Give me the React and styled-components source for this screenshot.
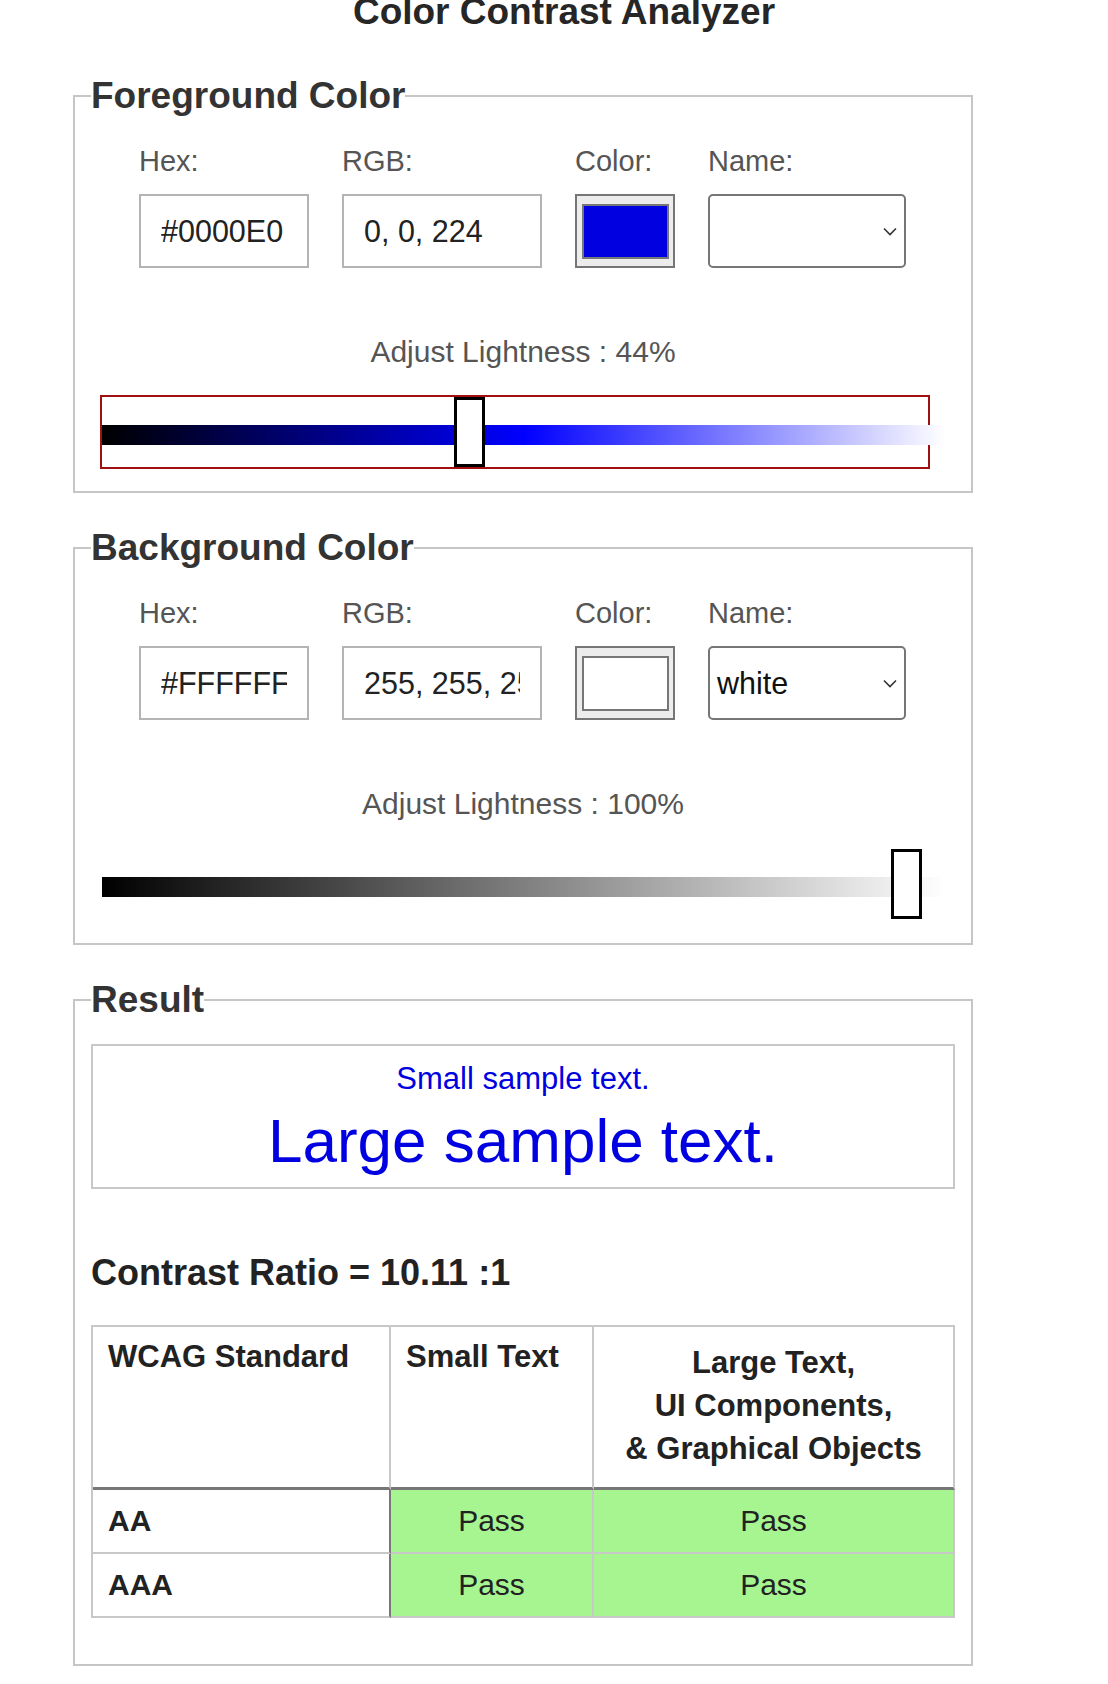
import React from "react";
import styled, { createGlobalStyle } from "styled-components";

const GlobalStyle = createGlobalStyle`
  html, body {
    margin: 0;
    padding: 0;
    background: #fff;
  }
  body {
    font-family: "Liberation Sans", Arial, Helvetica, sans-serif;
    color: #222;
  }
`;

const Page = styled.main`
  width: 1108px;
  padding-bottom: 18px;
`;

const Title = styled.h1`
  margin: 0;
  padding-left: 20px;
  text-align: center;
  font-size: 37px;
  line-height: 24px;
  font-weight: 700;
  color: #262626;
`;

const Panel = styled.fieldset`
  box-sizing: border-box;
  width: 900px;
  min-inline-size: 0;
  margin: ${(p) => (p.$first ? "51px" : "0")} 0 34.5px 73px;
  padding: 0 16px ${(p) => p.$padBottom}px;
  border: 2px solid #c6c6c6;
`;

const Legend = styled.legend`
  padding: 0;
  font-size: 37px;
  line-height: 42px;
  font-weight: 700;
  color: #333;
`;

const FieldGrid = styled.div`
  display: grid;
  grid-template-columns: 170px 200px 100px 198px;
  grid-template-rows: 32px 74px;
  column-gap: 33px;
  row-gap: 17px;
  margin-top: 28px;
  padding-left: 48px;
`;

const FieldLabel = styled.label`
  font-size: 29px;
  line-height: 32px;
  color: #555;
`;

const TextBox = styled.input`
  box-sizing: border-box;
  width: 100%;
  height: 74px;
  margin: 0;
  padding: 0 20px;
  border: 2px solid #b4b4b4;
  border-radius: 0;
  background: #fff;
  font: 30.5px "Liberation Sans", Arial, sans-serif;
  color: #222;
  outline: none;
`;

const SwatchFrame = styled.div`
  box-sizing: border-box;
  height: 74px;
  display: flex;
  align-items: center;
  justify-content: center;
  border: 2px solid #767676;
  background: #ececec;
`;

const Swatch = styled.div`
  box-sizing: border-box;
  width: 87px;
  height: 55px;
  border: 2px solid #777;
  background: ${(p) => p.$color};
`;

const NameSelect = styled.div`
  box-sizing: border-box;
  height: 74px;
  display: flex;
  align-items: center;
  justify-content: space-between;
  padding: 0 6px 0 7px;
  border: 2px solid #767676;
  border-radius: 5px;
  font-size: 30.5px;
  color: #111;
`;

const AdjustLabel = styled.div`
  margin-top: 67px;
  text-align: center;
  font-size: 30px;
  line-height: 34px;
  color: #555;
`;

const Slider = styled.div`
  position: relative;
  box-sizing: border-box;
  width: 830px;
  height: 74px;
  margin: 25.5px 0 0 9px;
  border: 2px solid ${(p) => (p.$focused ? "#a01010" : "transparent")};
`;

const Track = styled.div`
  width: 844px;
  height: 20px;
  margin-top: 28px;
  background: ${(p) => p.$gradient};
`;

const Thumb = styled.div`
  position: absolute;
  top: 0;
  box-sizing: border-box;
  width: 31px;
  height: 70px;
  border: 3px solid #000;
  background: #fff;
`;

const SampleBox = styled.div`
  margin-top: 22.5px;
  padding: 16.5px 0 10.5px;
  border: 2px solid #c8c8c8;
  text-align: center;
  color: ${(p) => p.$color};
`;

const SmallSample = styled.p`
  margin: 0;
  font-size: 31px;
  line-height: 34px;
`;

const LargeSample = styled.p`
  margin: 10px 0 0;
  font-size: 62px;
  line-height: 70px;
`;

const Ratio = styled.h2`
  margin: 63.5px 0 0;
  font-size: 36px;
  line-height: 42px;
  font-weight: 700;
  color: #222;
`;

const Table = styled.table`
  width: 864px;
  margin-top: 31px;
  table-layout: fixed;
  border-collapse: separate;
  border-spacing: 0;
  border-top: 2px solid #c8c8c8;
  border-left: 2px solid #c8c8c8;
  color: #222;
`;

const HeadCell = styled.th`
  box-sizing: border-box;
  width: ${(p) => p.$width}px;
  padding: ${(p) => (p.$multi ? "14px 16px 17px" : "8px 15px")};
  border-right: 2px solid #c8c8c8;
  border-bottom: 3px solid #777;
  vertical-align: top;
  text-align: ${(p) => (p.$multi ? "center" : "left")};
  font-size: 31px;
  line-height: 43px;
  font-weight: 700;
`;

const LevelCell = styled.td`
  padding: 14px 15px;
  border-right: 2px solid #777;
  border-bottom: 2px solid #c8c8c8;
  font-size: 30px;
  line-height: 34px;
  font-weight: 700;
`;

const ResultCell = styled.td`
  padding: 14px 16px;
  border-right: 2px solid #c8c8c8;
  border-bottom: 2px solid #c8c8c8;
  background: ${(p) => (p.$pass ? "#a6f591" : "#f7a6a6")};
  text-align: center;
  font-size: 30px;
  line-height: 34px;
`;

const Chevron = () => (
  <svg width="16" height="9" viewBox="0 0 16 9" aria-hidden="true">
    <path d="M2 1.5l6 6 6-6" fill="none" stroke="#333" strokeWidth="1.6" />
  </svg>
);

const colors = [
  {
    title: "Foreground Color",
    hex: "#0000E0",
    rgb: "0, 0, 224",
    swatch: "#0000e0",
    name: "",
    lightness: 44,
    focused: true,
    gradient:
      "linear-gradient(to right, hsl(240,100%,0%), hsl(240,100%,50%), hsl(240,100%,100%))",
  },
  {
    title: "Background Color",
    hex: "#FFFFFF",
    rgb: "255, 255, 255",
    swatch: "#ffffff",
    name: "white",
    lightness: 100,
    focused: false,
    gradient: "linear-gradient(to right, #000, #fff)",
  },
];

const results = [
  { level: "AA", small: true, large: true },
  { level: "AAA", small: true, large: true },
];

const ColorPanel = ({ data, first }) => (
  <Panel $first={first} $padBottom={22}>
    <Legend>{data.title}</Legend>
    <FieldGrid>
      <FieldLabel>Hex:</FieldLabel>
      <FieldLabel>RGB:</FieldLabel>
      <FieldLabel>Color:</FieldLabel>
      <FieldLabel>Name:</FieldLabel>
      <TextBox readOnly value={data.hex} aria-label="Hex" />
      <TextBox readOnly value={data.rgb} aria-label="RGB" />
      <SwatchFrame>
        <Swatch $color={data.swatch} />
      </SwatchFrame>
      <NameSelect>
        <span>{data.name}</span>
        <Chevron />
      </NameSelect>
    </FieldGrid>
    <AdjustLabel>Adjust Lightness : {data.lightness}%</AdjustLabel>
    <Slider
      $focused={data.focused}
      role="slider"
      aria-valuenow={data.lightness}
      aria-valuemin={0}
      aria-valuemax={100}
    >
      <Track $gradient={data.gradient} />
      <Thumb style={{ left: 8 + data.lightness * 7.81 }} />
    </Slider>
  </Panel>
);

export default function App() {
  return (
    <Page>
      <GlobalStyle />
      <Title>Color Contrast Analyzer</Title>
      {colors.map((c, i) => (
        <ColorPanel key={c.title} data={c} first={i === 0} />
      ))}
      <Panel $padBottom={45.5}>
        <Legend>Result</Legend>
        <SampleBox $color="#0000e0">
          <SmallSample>Small sample text.</SmallSample>
          <LargeSample>Large sample text.</LargeSample>
        </SampleBox>
        <Ratio>Contrast Ratio = 10.11 :1</Ratio>
        <Table>
          <thead>
            <tr>
              <HeadCell $width={298}>WCAG Standard</HeadCell>
              <HeadCell $width={203}>Small Text</HeadCell>
              <HeadCell $width={361} $multi>
                Large Text,
                <br />
                UI Components,
                <br />
                &amp; Graphical Objects
              </HeadCell>
            </tr>
          </thead>
          <tbody>
            {results.map((r) => (
              <tr key={r.level}>
                <LevelCell>{r.level}</LevelCell>
                <ResultCell $pass={r.small}>{r.small ? "Pass" : "Fail"}</ResultCell>
                <ResultCell $pass={r.large}>{r.large ? "Pass" : "Fail"}</ResultCell>
              </tr>
            ))}
          </tbody>
        </Table>
      </Panel>
    </Page>
  );
}
